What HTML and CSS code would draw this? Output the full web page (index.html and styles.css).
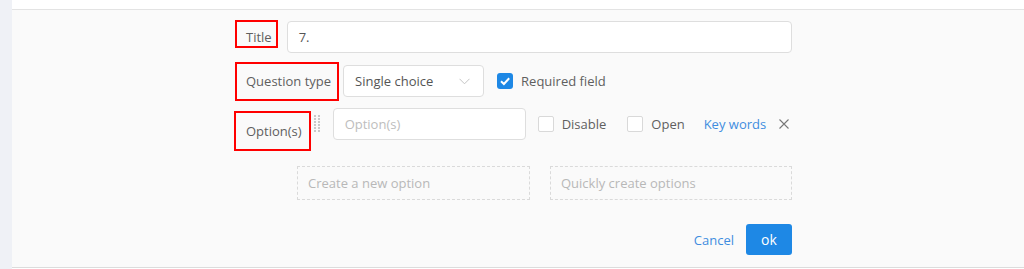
FILE: index.html
```html
<!DOCTYPE html>
<html lang="en">
<head>
<meta charset="utf-8">
<title>Question editor</title>
<link rel="stylesheet" href="styles.css">
</head>
<body>
<div class="page">
  <div class="side"></div>
  <div class="main">
    <div class="topbar"></div>
    <div class="content">
      <form class="form">
        <div class="row row-title">
          <span class="lbl mark-title">Title</span>
          <div class="field field-title">7.</div>
        </div>
        <div class="row row-type">
          <span class="lbl mark-type">Question type</span>
          <div class="field select">
            <span>Single choice</span>
            <svg class="chev" width="11" height="7" viewBox="0 0 11 7"><path d="M0.5 0.8 L5.5 5.8 L10.5 0.8" fill="none" stroke="#c4c4c4" stroke-width="1"/></svg>
          </div>
          <span class="check checked">
            <svg width="16" height="16" viewBox="0 0 16 16"><rect width="16" height="16" rx="3" fill="#1e88e5"/><path d="M4 8.2 L6.9 11 L12.2 5.3" fill="none" stroke="#fff" stroke-width="2"/></svg>
          </span>
          <span class="ctext">Required field</span>
        </div>
        <div class="row row-opt">
          <span class="lbl mark-opt">Option(s)</span>
          <svg class="handle" width="7" height="18" viewBox="0 0 7 18">
            <g fill="#c9c9c9">
              <rect x="0" y="0" width="2" height="2"/><rect x="4" y="0" width="2" height="2"/>
              <rect x="0" y="3" width="2" height="2"/><rect x="4" y="3" width="2" height="2"/>
              <rect x="0" y="6" width="2" height="2"/><rect x="4" y="6" width="2" height="2"/>
              <rect x="0" y="9" width="2" height="2"/><rect x="4" y="9" width="2" height="2"/>
              <rect x="0" y="12" width="2" height="2"/><rect x="4" y="12" width="2" height="2"/>
              <rect x="0" y="15" width="2" height="2"/><rect x="4" y="15" width="2" height="2"/>
            </g>
          </svg>
          <div class="field field-opt placeholder">Option(s)</div>
          <div class="opt-tools">
            <span class="check"></span>
            <span class="ctext">Disable</span>
            <span class="check check-open"></span>
            <span class="ctext">Open</span>
            <a class="link kw">Key words</a>
            <svg class="close" width="10" height="10" viewBox="0 0 10 10"><path d="M0.5 0.5 L9.5 9.5 M9.5 0.5 L0.5 9.5" stroke="#777" stroke-width="1.1"/></svg>
          </div>
        </div>
        <div class="row row-add">
          <div class="dashed dashed-new">Create a new option</div>
          <div class="dashed dashed-quick">Quickly create options</div>
        </div>
        <div class="row row-actions">
          <a class="link cancel">Cancel</a>
          <span class="btn-ok">ok</span>
        </div>
      </form>
    </div>
  </div>
</div>
</body>
</html>
```
FILE: styles.css
```css
html, body {
  margin: 0;
  padding: 0;
  background: #ffffff;
}
body {
  font-family: "Open Sans", "Liberation Sans", sans-serif;
  font-size: 13px;
  color: #5f5f5f;
}
.page {
  display: flex;
  height: 269px;
}
.side {
  width: 12px;
  background: #eff1f6;
}
.main {
  flex: 1;
}
.topbar {
  height: 9px;
  background: #ffffff;
  border-bottom: 1px solid #e3e3e3;
}
.content {
  height: 246px;
  padding-top: 11px;
  background: #fafafa;
  border-bottom: 1px solid #dcdcdc;
}
.form {
  margin: 0 0 0 222px;
  width: 558px;
}
.row {
  display: flex;
  align-items: center;
}
.lbl {
  position: relative;
  margin-left: 12px;
  line-height: 20px;
  color: #5f5f5f;
  white-space: nowrap;
}
.lbl::after {
  content: "";
  position: absolute;
  border: 2px solid #ff0000;
}
.mark-title::after { left: -11px; right: -6px; top: -7px; bottom: -1px; }
.mark-type::after { left: -11px; right: -8px; top: -9px; bottom: -10px; }
.mark-opt::after { left: -12px; right: -9px; top: -10px; bottom: -10px; }

.field {
  box-sizing: border-box;
  height: 32px;
  background: #ffffff;
  border: 1px solid #dedede;
  border-radius: 4px;
  display: flex;
  align-items: center;
  padding-left: 11px;
  color: #555;
}
.field-title {
  flex: 1;
  margin-left: 15px;
}
.row-type {
  margin-top: 12px;
}
.select {
  width: 141px;
  margin-left: 12px;
  justify-content: space-between;
  padding-right: 13px;
}
.chev { display: block; }
.check {
  box-sizing: border-box;
  width: 16px;
  height: 16px;
  border: 1px solid #d9d9d9;
  border-radius: 2px;
  background: #fff;
  flex: none;
}
.check.checked {
  border: none;
  margin-left: 13px;
}
.check svg { display: block; }
.ctext {
  margin-left: 8px;
  color: #5f5f5f;
  white-space: nowrap;
}
.row-opt {
  margin-top: 11px;
  align-items: flex-start;
}
.row-opt > * { flex-shrink: 0; }
.mark-opt {
  margin-top: 13px;
}
.handle {
  display: block;
  margin-left: 12px;
  margin-top: 7px;
}
.field-opt {
  width: 193px;
  margin-left: 12px;
}
.placeholder { color: #bdbdbd; }
.opt-tools {
  height: 32px;
  display: flex;
  align-items: center;
  margin-left: 12px;
  white-space: nowrap;
}
.check-open { margin-left: 21px; }
.link {
  color: #3f8ddf;
  cursor: pointer;
  white-space: nowrap;
}
.kw { margin-left: 19px; }
.close {
  display: block;
  flex: none;
  margin-left: 13px;
}
.row-add {
  margin-top: 25px;
  margin-left: 63px;
  gap: 20px;
}
.dashed {
  box-sizing: border-box;
  height: 34px;
  border: 1px dashed #dadada;
  display: flex;
  align-items: center;
  padding-left: 10px;
  color: #b8b8b8;
}
.dashed-new { width: 233px; }
.dashed-quick { width: 242px; }
.row-actions {
  margin-top: 24px;
  justify-content: flex-end;
}
.cancel { margin-right: 12px; }
.btn-ok {
  width: 46px;
  height: 31px;
  border-radius: 3px;
  background: #1e88e5;
  color: #fff;
  font-size: 14px;
  display: flex;
  align-items: center;
  justify-content: center;
}
```
